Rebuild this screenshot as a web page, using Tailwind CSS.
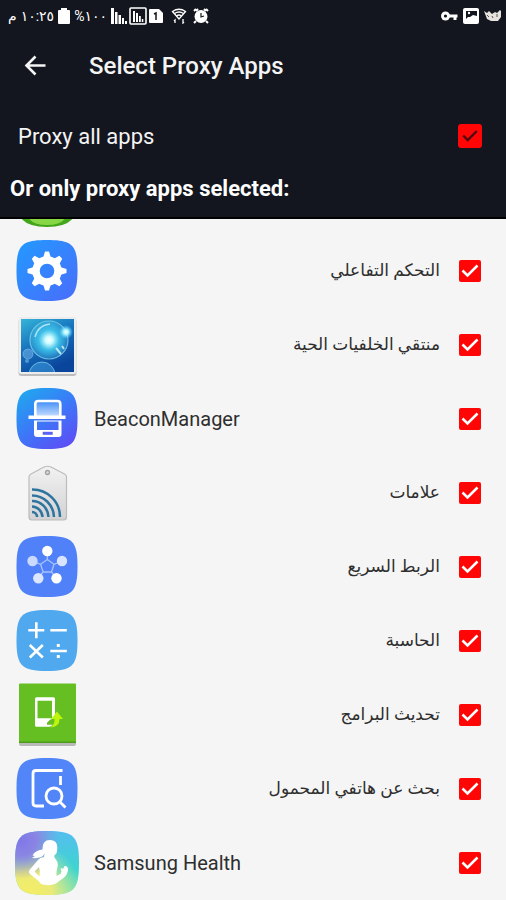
<!DOCTYPE html>
<html lang="en">
<head>
<meta charset="utf-8">
<meta name="viewport" content="width=device-width, initial-scale=1">
<title>Select Proxy Apps</title>
<script src="https://cdn.jsdelivr.net/npm/@tailwindcss/browser@4"></script>
</head>
<body class="bg-[#f5f5f5] font-[Roboto,'DejaVu_Sans',sans-serif]">
<svg class="hidden" aria-hidden="true">
  <symbol id="tick" viewBox="0 0 22 22"><path d="M3.500 10.500 8.500 15.500 18.500 5.500" fill="none" stroke="currentColor" stroke-width="2.500"/></symbol>
  <symbol id="squircle" viewBox="0 0 64 64"><path d="M32 1C6.500 1 1.500 6 1.500 31.500S6.500 62 32 62 62.500 57 62.500 31.500 57.500 1 32 1Z"/></symbol>
</svg>
<main class="flex h-screen flex-col overflow-hidden">
  <header class="shrink-0 border-b-2 border-black bg-[#13161e] text-[#f4f4f4]">
    <div class="flex h-8 items-center justify-between pr-1 pl-2 text-white">
      <div class="flex items-center gap-1 text-sm leading-8" dir="ltr">
        <span class="flex gap-1"><span>م</span><span>١٠:٢٥</span></span>
        <svg class="h-4 w-3" viewBox="0 0 12 16" fill="currentColor"><path d="M3 0h6v2h2q1 0 1 1v12q0 1-1 1H1q-1 0-1-1V3q0-1 1-1h2Z"/></svg>
        <span class="flex"><span>%</span><span>١٠٠</span></span>
        <span class="flex items-center gap-0.5">
          <svg class="h-4 w-4" viewBox="0 0 16 16" fill="currentColor"><path d="M0 0h3v16H0ZM4 4h2.500v12H4ZM7.500 7H10v9H7.500ZM11 10h2v6h-2ZM14 13h2v3h-2Z"/></svg>
          <svg class="h-[18px] w-[18px]" viewBox="0 0 18 18" fill="currentColor"><rect x="1" y="1" width="16" height="16" rx="1" fill="none" stroke="currentColor" stroke-width="1.600"/><path d="M4 4h2v11H4ZM7 6h2v9H7ZM10 9h1.800v6H10ZM12.800 12h1.500v3h-1.500Z"/></svg>
          <svg class="h-4 w-[14px]" viewBox="0 0 14 16"><path d="M1 1h9l4 4v9q0 1-1 1H1q-1 0-1-1V2q0-1 1-1Z" fill="#fff"/><path d="M5 6l2-1v7" fill="none" stroke="#13161e" stroke-width="1.500"/></svg>
        </span>
        <span class="ml-1 flex items-center gap-1.5">
          <svg class="h-4 w-4" viewBox="0 0 16 16" fill="none" stroke="currentColor" stroke-width="1.300"><path d="M1.500 3.500Q8-1 14.500 3.500L8 11Z"/><path d="M3.500 5.500Q8 2.500 12.500 5.500M5.500 8Q8 6 10.500 8"/><path d="M4 15v-3l-1 1M12 11v4l1-1"/></svg>
          <svg class="h-4 w-4" viewBox="0 0 16 16"><path d="M3 3 5 1M13 3l-2-2M3 13l-2 2M13 13l2 2M1 3l2-2M15 3l-2-2" stroke="#fff" stroke-width="2"/><circle cx="8" cy="8.500" r="6.500" fill="#fff"/><path d="M8 5v4l3-1" fill="none" stroke="#13161e" stroke-width="1.200"/></svg>
        </span>
      </div>
      <div class="flex items-center gap-1">
        <svg class="h-4 w-[18px]" viewBox="0 0 18 16"><circle cx="5.500" cy="8" r="4.500" fill="#fff"/><path d="M9 8h8.500M15 8v4" stroke="#fff" stroke-width="3"/><circle cx="5.500" cy="8" r="1.600" fill="#13161e"/></svg>
        <svg class="h-[18px] w-[18px]" viewBox="0 0 18 18"><rect x="1" y="1" width="16" height="16" rx="2" fill="#fff"/><path d="M4 4h11v5l-4-1-3 2-2 0-2 2Z" fill="#13161e"/><circle cx="7" cy="6" r="1.200" fill="#fff"/></svg>
        <svg class="h-3 w-[18px]" viewBox="0 0 18 12" fill="#e6e2dd"><path d="M0 1l3 2 2-2 3 3 3-2 2 1 3-3 1 1v6l-3 4H7L3 9Z"/><path d="M3 5l2 2M8 6l1 2M13 4v3" stroke="#555" stroke-width="1"/></svg>
      </div>
    </div>
    <div class="flex h-[68px] items-center gap-[43px] pl-6">
      <button type="button" aria-label="Back" class="block"><svg class="h-6 w-[22px]" viewBox="0 0 22 24" fill="none" stroke="currentColor" stroke-width="2.600"><path d="M21.500 11.500H3M11.500 2.500 2.500 11.500l9 9"/></svg></button>
      <h1 class="text-2xl font-medium">Select Proxy Apps</h1>
    </div>
    <label class="flex h-[72px] items-center justify-between pr-6 pl-[18px] text-[22px]">
      <span>Proxy all apps</span>
      <span class="grid"><input type="checkbox" checked class="col-start-1 row-start-1 size-6 appearance-none rounded-[3px] bg-[#ff0505]"><svg class="pointer-events-none col-start-1 row-start-1 m-0.5 size-5 text-[#4a0a0e]"><use href="#tick"/></svg></span>
    </label>
    <h2 class="h-[45px] pl-[10px] text-[22px] leading-[34px] font-bold text-white">Or only proxy apps selected:</h2>
  </header>
  <ul class="text-[#2e2e2e]">
    <li class="h-[15px] pl-[15px]">
      <svg class="h-[15px] w-16" viewBox="0 0 64 15"><path d="M5-2Q12 8 32 8T59-2Z" fill="#43a51b"/><path d="M13-2Q17 6 32 6T51-2Z" fill="#86d646"/></svg>
    </li>
    <li><label class="flex h-[74px] items-center pr-[25px] pl-[15px]">
      <svg class="size-16 shrink-0" viewBox="0 0 64 64"><defs><linearGradient id="g1" x1="0" y1="0" x2="1" y2="1"><stop stop-color="#229aff"/><stop offset="1" stop-color="#4a6cfb"/></linearGradient></defs><use href="#squircle" fill="url(#g1)"/><circle cx="32" cy="32" r="11" fill="none" stroke="#fff" stroke-width="7.400"/><g fill="#fff"><path id="tooth" d="M28 19 30 12.500h4L36 19Z"/><use href="#tooth" transform="rotate(45 32 32)"/><use href="#tooth" transform="rotate(90 32 32)"/><use href="#tooth" transform="rotate(135 32 32)"/><use href="#tooth" transform="rotate(180 32 32)"/><use href="#tooth" transform="rotate(225 32 32)"/><use href="#tooth" transform="rotate(270 32 32)"/><use href="#tooth" transform="rotate(315 32 32)"/></g></svg>
      <span class="mr-[19px] ml-[15px] flex-1 text-[17px]" dir="rtl" lang="ar">التحكم التفاعلي</span>
      <span class="grid"><input type="checkbox" checked class="col-start-1 row-start-1 size-[22px] appearance-none rounded-xs bg-[#ff0505]"><svg class="pointer-events-none col-start-1 row-start-1 size-[22px] text-white"><use href="#tick"/></svg></span>
    </label></li>
    <li><label class="flex h-[74px] items-center pr-[25px] pl-[15px]">
      <svg class="size-16 shrink-0" viewBox="0 0 64 64"><defs><linearGradient id="g2" x1="0" y1="0" x2=".5" y2="1"><stop stop-color="#35b5d8"/><stop offset=".5" stop-color="#1672bd"/><stop offset="1" stop-color="#0a459c"/></linearGradient><radialGradient id="g3"><stop stop-color="#fff"/><stop offset=".2" stop-color="#c9fbff"/><stop offset=".55" stop-color="#3fc9ee" stop-opacity=".85"/><stop offset="1" stop-color="#4dc8ee" stop-opacity=".25"/></radialGradient><radialGradient id="g4"><stop stop-color="#fff"/><stop offset=".35" stop-color="#aaf5ff"/><stop offset="1" stop-color="#5de0ff" stop-opacity="0"/></radialGradient><clipPath id="c2"><path d="M6 6h53v53H6Z"/></clipPath></defs><rect x="3.500" y="6" width="58" height="57" rx="3" fill="#bdbdbd"/><rect x="3.500" y="4" width="58" height="57" rx="3" fill="#ececec"/><g clip-path="url(#c2)"><path d="M6 6h53v53H6Z" fill="url(#g2)"/><circle cx="34" cy="27" r="19" fill="url(#g3)" stroke="#8fdcf0" stroke-opacity=".7" stroke-width="1.200"/><path d="M20 24Q23 12 35 11" fill="none" stroke="#d6f7ff" stroke-width="1.500" opacity=".7"/><path d="M41 35l5 6M47 33l2 3" stroke="#d9faff" stroke-width="2" opacity=".8"/><circle cx="51" cy="19" r="7" fill="url(#g4)"/><circle cx="13" cy="41" r="5" fill="#79b8ee" fill-opacity=".5" stroke="#8ec9f5" stroke-opacity=".5"/><circle cx="12" cy="48" r="2" fill="#79b8ee" opacity=".6"/><circle cx="27" cy="62" r="13" fill="#3b9ada" fill-opacity=".6" stroke="#8bd4f3" stroke-opacity=".7"/></g></svg>
      <span class="mr-[19px] ml-[15px] flex-1 text-[17px]" dir="rtl" lang="ar">منتقي الخلفيات الحية</span>
      <span class="grid"><input type="checkbox" checked class="col-start-1 row-start-1 size-[22px] appearance-none rounded-xs bg-[#ff0505]"><svg class="pointer-events-none col-start-1 row-start-1 size-[22px] text-white"><use href="#tick"/></svg></span>
    </label></li>
    <li><label class="flex h-[74px] items-center pr-[25px] pl-[15px]">
      <svg class="size-16 shrink-0" viewBox="0 0 64 64"><defs><linearGradient id="g5" x1=".1" y1="0" x2=".8" y2="1"><stop stop-color="#1ea9ee"/><stop offset=".5" stop-color="#3b7af8"/><stop offset="1" stop-color="#5d4df5"/></linearGradient><linearGradient id="g6" x1="0" y1="0" x2="0" y2="1"><stop stop-color="#3f8df7"/><stop offset="1" stop-color="#c3dcff"/></linearGradient></defs><use href="#squircle" fill="url(#g5)"/><path d="M20.300 29V17q0-3 3-3h19q3 0 3 3v12" fill="url(#g6)" stroke="#fff" stroke-width="2.600"/><path d="M13.500 28.500h37v3.600h-37Z" fill="#fff"/><path fill-rule="evenodd" d="M19 33.500h27.500V47q0 3-3 3H22q-3 0-3-3Zm3 1v8.500h21.500v-8.500Z" fill="#fff"/><path d="M27.700 44.800h10v3h-10Z" fill="#5b62f4"/></svg>
      <span class="mr-[19px] ml-[15px] flex-1 text-xl">BeaconManager</span>
      <span class="grid"><input type="checkbox" checked class="col-start-1 row-start-1 size-[22px] appearance-none rounded-xs bg-[#ff0505]"><svg class="pointer-events-none col-start-1 row-start-1 size-[22px] text-white"><use href="#tick"/></svg></span>
    </label></li>
    <li><label class="flex h-[74px] items-center pr-[25px] pl-[15px]">
      <svg class="size-16 shrink-0" viewBox="0 0 64 64"><defs><linearGradient id="g7" x1="0" y1="0" x2="0" y2="1"><stop stop-color="#f2f2f2"/><stop offset="1" stop-color="#d2d2d4"/></linearGradient></defs><path d="M14 16q0-2 2-3l13-7q3.500-1.500 7 0l13.500 7q2 1 2 3v40q0 3-3 3H17q-3 0-3-3Z" fill="url(#g7)" stroke="#bcbcbc" stroke-width="1.200"/><circle cx="32.500" cy="11.500" r="2" fill="#ddd" stroke="#a0a0a0" stroke-width="1.300"/><path d="M17 28.500A27.500 27.500 0 0 1 45 56M17 34.500A22 22 0 0 1 39 56M17 40A16.500 16.500 0 0 1 33.500 56M17 45.500A11 11 0 0 1 27.500 56M17 51A5 5 0 0 1 22 56" fill="none" stroke="#2f749f" stroke-width="2.500"/></svg>
      <span class="mr-[19px] ml-[15px] flex-1 text-[17px]" dir="rtl" lang="ar">علامات</span>
      <span class="grid"><input type="checkbox" checked class="col-start-1 row-start-1 size-[22px] appearance-none rounded-xs bg-[#ff0505]"><svg class="pointer-events-none col-start-1 row-start-1 size-[22px] text-white"><use href="#tick"/></svg></span>
    </label></li>
    <li><label class="flex h-[74px] items-center pr-[25px] pl-[15px]">
      <svg class="size-16 shrink-0" viewBox="0 0 64 64"><use href="#squircle" fill="#5081f8"/><path d="M32.300 24.500 39 29.300 36.500 37H28.100L25.600 29.300ZM32.300 24.500V17M39 29.300 47 26M36.500 37l5.200 6.300M28.100 37 23 43.300M25.600 29.300 17.300 26" fill="none" stroke="#a9c2ff" stroke-width="1.300"/><circle cx="32.300" cy="16" r="5.200" fill="#fff"/><circle cx="17.500" cy="26" r="5.200" fill="#c9d9ff"/><circle cx="47" cy="26" r="5.200" fill="#d9e4ff"/><circle cx="23.300" cy="43.300" r="5.200" fill="#dce6ff"/><circle cx="41.500" cy="43.300" r="5.200" fill="#fff"/></svg>
      <span class="mr-[19px] ml-[15px] flex-1 text-[17px]" dir="rtl" lang="ar">الربط السريع</span>
      <span class="grid"><input type="checkbox" checked class="col-start-1 row-start-1 size-[22px] appearance-none rounded-xs bg-[#ff0505]"><svg class="pointer-events-none col-start-1 row-start-1 size-[22px] text-white"><use href="#tick"/></svg></span>
    </label></li>
    <li><label class="flex h-[74px] items-center pr-[25px] pl-[15px]">
      <svg class="size-16 shrink-0" viewBox="0 0 64 64"><use href="#squircle" fill="#50a9ee"/><path d="M13.300 21.300h16M21.300 13.300v16M35.300 21.300h16.500M14.800 36l13 12.500M27.800 36l-13 12.500M35.300 42h16.500" stroke="#fff" stroke-width="2.600"/><path d="M41.800 35h3v3h-3ZM41.800 46h3v3h-3Z" fill="#fff"/></svg>
      <span class="mr-[19px] ml-[15px] flex-1 text-[17px]" dir="rtl" lang="ar">الحاسبة</span>
      <span class="grid"><input type="checkbox" checked class="col-start-1 row-start-1 size-[22px] appearance-none rounded-xs bg-[#ff0505]"><svg class="pointer-events-none col-start-1 row-start-1 size-[22px] text-white"><use href="#tick"/></svg></span>
    </label></li>
    <li><label class="flex h-[74px] items-center pr-[25px] pl-[15px]">
      <svg class="size-16 shrink-0" viewBox="0 0 64 64"><rect x="4" y="3" width="57" height="60" rx="2" fill="#b9b9b9"/><rect x="4" y=".5" width="57" height="59" rx="1" fill="#65be22"/><path d="M4 58.500h57v1.500H4Z" fill="#4e9c17"/><path fill-rule="evenodd" d="M21.500 14.300h17q1.500 0 1.500 1.500v19l-5 2-3 3v2h6l-3 2H21.500q-1.500 0-1.500-1.500v-26.500q0-1.500 1.500-1.500Zm1 3.500v17.500h14.500v-17.500Z" fill="#fff"/><path d="M42 28.500l6 7.500h-3.500q0 8-9 8.500 4.500-3 4-8.500H36Z" fill="#bdf60c"/></svg>
      <span class="mr-[19px] ml-[15px] flex-1 text-[17px]" dir="rtl" lang="ar">تحديث البرامج</span>
      <span class="grid"><input type="checkbox" checked class="col-start-1 row-start-1 size-[22px] appearance-none rounded-xs bg-[#ff0505]"><svg class="pointer-events-none col-start-1 row-start-1 size-[22px] text-white"><use href="#tick"/></svg></span>
    </label></li>
    <li><label class="flex h-[74px] items-center pr-[25px] pl-[15px]">
      <svg class="size-16 shrink-0" viewBox="0 0 64 64"><use href="#squircle" fill="#5286f8"/><g fill="none" stroke="#fff" stroke-width="2.800"><path d="M47.500 13.500H21q-3 0-3 3V46q0 3 3 3h8M45.500 19v9"/><circle cx="39" cy="39" r="8"/><path d="M45 45l5.500 5.500"/></g></svg>
      <span class="mr-[19px] ml-[15px] flex-1 text-[17px]" dir="rtl" lang="ar">بحث عن هاتفي المحمول</span>
      <span class="grid"><input type="checkbox" checked class="col-start-1 row-start-1 size-[22px] appearance-none rounded-xs bg-[#ff0505]"><svg class="pointer-events-none col-start-1 row-start-1 size-[22px] text-white"><use href="#tick"/></svg></span>
    </label></li>
    <li><label class="flex h-[74px] items-center pr-[25px] pl-[15px]">
      <svg class="size-16 shrink-0" viewBox="0 0 64 64"><defs><radialGradient id="h1" cx=".1" cy=".15" r=".6"><stop stop-color="#8277e8"/><stop offset=".4" stop-color="#8a86e3"/><stop offset="1" stop-color="#8a8fe0" stop-opacity="0"/></radialGradient><radialGradient id="h2" cx=".2" cy="1" r=".85"><stop stop-color="#f6ee62"/><stop offset=".45" stop-color="#eaea78"/><stop offset="1" stop-color="#d8e89a" stop-opacity="0"/></radialGradient><linearGradient id="h3" x1="0" y1="0" x2="0" y2="1"><stop stop-color="#55bdf0"/><stop offset=".6" stop-color="#3ed5cf"/><stop offset="1" stop-color="#7be3a6"/></linearGradient><path id="big" d="M32 0C5 0 0 5 0 32S5 64 32 64 64 59 64 32 59 0 32 0Z"/></defs><use href="#big" fill="url(#h3)"/><use href="#big" fill="url(#h2)"/><use href="#big" fill="url(#h1)"/><path fill="#fff" fill-rule="evenodd" d="M35 9Q42 9 42.300 16 42.500 23 39.500 24 38.500 26 40.500 28 43.500 31 42.500 36 41 41 41.500 45L45.500 43 46.500 40 45.500 37.500Q47 37 48 38L49.500 35Q52.500 34.500 53 38 53 43 49 46.500L41 52.500Q34 55.500 26 53L23.500 50 15 43Q13 41 14.500 39L23 29Q25 26.500 29 26L29.500 22.500Q27 28 17 27L20 25 17.500 24.500Q20 19.500 27.500 18.500 27 9 35 9ZM24 36 19.500 40.500 24.500 45.500Q25.500 40 24 36Z"/></svg>
      <span class="mr-[19px] ml-[15px] flex-1 text-xl">Samsung Health</span>
      <span class="grid"><input type="checkbox" checked class="col-start-1 row-start-1 size-[22px] appearance-none rounded-xs bg-[#ff0505]"><svg class="pointer-events-none col-start-1 row-start-1 size-[22px] text-white"><use href="#tick"/></svg></span>
    </label></li>
  </ul>
</main>
</body>
</html>
